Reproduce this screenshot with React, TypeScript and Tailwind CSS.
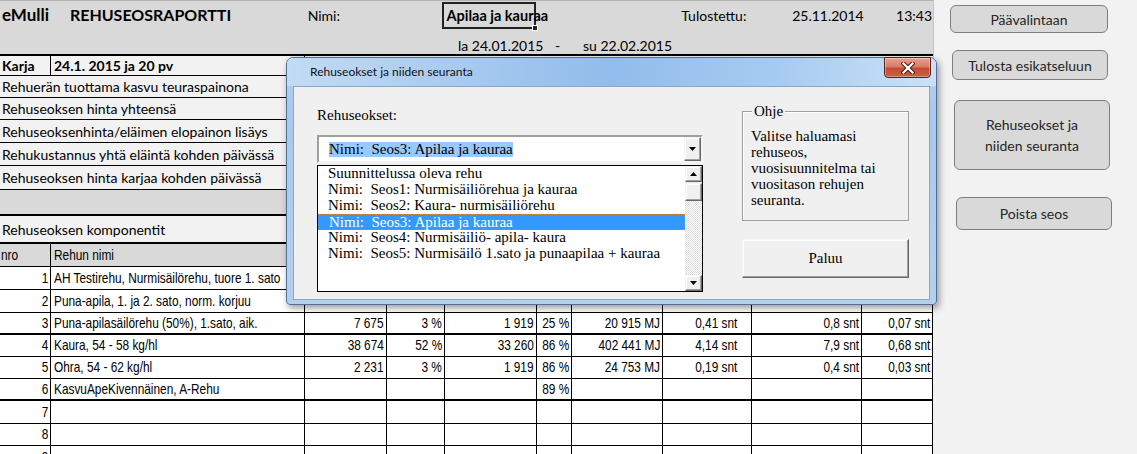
import React from 'react';

const SHEET = "font-['Lato',sans-serif]";
const NARROW = "font-['Liberation_Sans',sans-serif]";
const SERIF = "font-['Liberation_Serif',serif]";

const colW = [
  'w-[51px]',
  'w-[254px]',
  'w-[82px]',
  'w-[58px]',
  'w-[92px]',
  'w-[35px]',
  'w-[91px]',
  'w-[89px]',
  'w-[110px]',
  'w-[71px]',
];

type Row = { n: string; name: string; vals: string[]; h: string; thick?: boolean };

const dataRows: Row[] = [
  { n: '1', name: 'AH Testirehu, Nurmisäilörehu, tuore 1. sato', vals: [], h: 'h-[23px]' },
  { n: '2', name: 'Puna-apila, 1. ja 2. sato, norm. korjuu', vals: [], h: 'h-[23px]' },
  {
    n: '3',
    name: 'Puna-apilasäilörehu (50%), 1.sato, aik.',
    vals: ['7 675', '3 %', '1 919', '25 %', '20 915 MJ', '0,41 snt', '0,8 snt', '0,07 snt'],
    h: 'h-[22px]',
    thick: true,
  },
  {
    n: '4',
    name: 'Kaura, 54 - 58 kg/hl',
    vals: ['38 674', '52 %', '33 260', '86 %', '402 441 MJ', '4,14 snt', '7,9 snt', '0,68 snt'],
    h: 'h-[22px]',
  },
  {
    n: '5',
    name: 'Ohra, 54 - 62 kg/hl',
    vals: ['2 231', '3 %', '1 919', '86 %', '24 753 MJ', '0,19 snt', '0,4 snt', '0,03 snt'],
    h: 'h-[22px]',
  },
  { n: '6', name: 'KasvuApeKivennäinen, A-Rehu', vals: ['', '', '', '89 %'], h: 'h-[22px]', thick: true },
  { n: '7', name: '', vals: [], h: 'h-[23px]' },
  { n: '8', name: '', vals: [], h: 'h-[22px]' },
  { n: '9', name: '', vals: [], h: 'h-[23px]' },
];

const descRows = [
  { text: 'Rehuerän tuottama kasvu teuraspainona', h: 'h-[22px]' },
  { text: 'Rehuseoksen hinta yhteensä', h: 'h-[22px]' },
  { text: 'Rehuseoksenhinta/eläimen elopainon lisäys', h: 'h-[23px]' },
  { text: 'Rehukustannus yhtä eläintä kohden päivässä', h: 'h-[23px]' },
  { text: 'Rehuseoksen hinta karjaa kohden päivässä', h: 'h-[24px]' },
];

const listItems = [
  'Suunnittelussa oleva rehu',
  'Nimi:  Seos1: Nurmisäiliörehua ja kauraa',
  'Nimi:  Seos2: Kaura- nurmisäiliörehu',
  'Nimi:  Seos3: Apilaa ja kauraa',
  'Nimi:  Seos4: Nurmisäiliö- apila- kaura',
  'Nimi:  Seos5: Nurmisäilö 1.sato ja punaapilaa + kauraa',
];

const raised =
  'bg-[#f0f0f0] border border-t-[#f4f4f4] border-l-[#f4f4f4] border-r-[#696969] border-b-[#696969] shadow-[inset_-1px_-1px_0_#a0a0a0,inset_1px_1px_0_#ffffff]';

function Arrow({ up }: { up?: boolean }) {
  return (
    <svg width="7" height="4" viewBox="0 0 7 4">
      <path d={up ? 'M0 4 L7 4 L3.5 0 Z' : 'M0 0 L7 0 L3.5 4 Z'} fill="#000" />
    </svg>
  );
}

// narrow cell text: Arial Narrow is not installed, so squeeze Liberation Sans
function Narrow({ children, left }: { children: React.ReactNode; left?: boolean }) {
  return (
    <span className={`inline-block whitespace-nowrap scale-x-[0.79] ${left ? 'origin-left' : 'origin-right'}`}>
      {children}
    </span>
  );
}

function DataRow({ row }: { row: Row }) {
  return (
    <div
      className={`flex bg-white ${row.h} ${row.thick ? 'border-b-2' : 'border-b'} border-black ${NARROW} text-[15px] text-black`}
    >
      <div className={`${colW[0]} shrink-0 border-r border-black flex items-center justify-end pr-[2px]`}>
        <Narrow>{row.n}</Narrow>
      </div>
      <div className={`${colW[1]} shrink-0 border-r border-black flex items-center pl-[3px] overflow-hidden`}>
        <Narrow left>{row.name}</Narrow>
      </div>
      {colW.slice(2).map((w, i) => (
        <div
          key={i}
          className={`${w} shrink-0 border-r border-black flex items-center justify-end ${
            i === 5 ? 'pr-[14px]' : 'pr-[2px]'
          }`}
        >
          <Narrow>{row.vals[i] ?? ''}</Narrow>
        </div>
      ))}
    </div>
  );
}

function Sheet() {
  return (
    <div className={`w-[933px] shrink-0 ${SHEET} text-black`}>
      <div className="h-[54px] bg-[#d9d9d9] border-t border-[#b4b4b4] flex flex-col">
        <div className="h-[29px] flex items-center text-[14px]">
          <span className="pl-[2px] w-[70px] font-bold text-[17px]">eMulli</span>
          <span className="w-[238px] font-bold text-[16px]">REHUSEOSRAPORTTI</span>
          <span className="w-[135px]">Nimi:</span>
          <div className="w-[94px] h-[27px] border-2 border-[#222] relative flex items-center pl-[2px] mt-[1px]">
            <span className="font-bold text-[14.5px] whitespace-nowrap">Apilaa ja kauraa</span>
            <span className="absolute right-[-4px] bottom-[-4px] w-[6px] h-[6px] bg-[#222] border border-white" />
          </div>
          <span className="w-[145px]" />
          <span className="w-[111px]">Tulostettu:</span>
          <span className="w-[104px]">25.11.2014</span>
          <span className="flex-1 text-right pr-[1px]">13:43</span>
        </div>
        <div className="flex-1 flex items-center text-[14px] pt-[6px]">
          <span className="w-[458px]" />
          <span className="w-[97px]">la 24.01.2015</span>
          <span className="w-[28px]">-</span>
          <span>su 22.02.2015</span>
        </div>
      </div>

      <div className="h-[22px] flex bg-[#f2f2f2] border-t-2 border-b border-black font-bold text-[14px]">
        <div className="w-[51px] shrink-0 border-r border-black flex items-center pl-[2px]">Karja</div>
        <div className="w-[254px] shrink-0 border-r border-black flex items-center pl-[3px]">24.1. 2015 ja 20 pv</div>
        <div className="flex-1" />
      </div>
      {descRows.map((r) => (
        <div
          key={r.text}
          className={`${r.h} flex items-center bg-[#f2f2f2] border-b border-black pl-[2px] text-[14px] whitespace-nowrap`}
        >
          {r.text}
        </div>
      ))}
      <div className="h-[26px] bg-[#d9d9d9] border-b-2 border-black" />
      <div className="h-[28px] flex items-center bg-[#f2f2f2] border-b-2 border-black pl-[2px] text-[14px]">
        Rehuseoksen komponentit
      </div>
      <div className={`h-[23px] flex bg-[#d9d9d9] border-b border-black ${NARROW} text-[15px]`}>
        <div className="w-[51px] shrink-0 border-r border-black flex items-center pl-[1px]">
          <Narrow left>nro</Narrow>
        </div>
        <div className="w-[254px] shrink-0 border-r border-black flex items-center pl-[3px]">
          <Narrow left>Rehun nimi</Narrow>
        </div>
        <div className="flex-1" />
      </div>
      {dataRows.map((r) => (
        <DataRow key={r.n} row={r} />
      ))}
    </div>
  );
}

function SideButton({ label, cls }: { label: React.ReactNode; cls: string }) {
  return (
    <div
      className={`${cls} flex items-center justify-center text-center rounded-[6px] border border-[#7f7f7f] bg-[#d9d9d9] text-[#262626] text-[14px] leading-[21px] ${SHEET}`}
    >
      {label}
    </div>
  );
}

function SidePanel() {
  return (
    <div className="flex-1 bg-[#f2f2f2] border-l border-[#c4c4c4] flex flex-col items-start">
      <SideButton label="Päävalintaan" cls="ml-[16px] mt-[5px] w-[158px] h-[28px]" />
      <SideButton label="Tulosta esikatseluun" cls="ml-[18px] mt-[17px] w-[156px] h-[30px]" />
      <SideButton
        label={
          <span>
            Rehuseokset ja
            <br />
            niiden seuranta
          </span>
        }
        cls="ml-[20px] mt-[20px] w-[156px] h-[70px]"
      />
      <SideButton label="Poista seos" cls="ml-[22px] mt-[27px] w-[156px] h-[33px]" />
    </div>
  );
}

function Dialog() {
  return (
    <div className="absolute left-[286px] top-[57px] w-[651px] h-[248px] rounded-t-[7px] rounded-b-[4px] border border-[#50709a] bg-[linear-gradient(180deg,#b9d4f0_0%,#a8c9ec_20%,#b4d0ee_100%)] shadow-[2px_3px_7px_rgba(0,0,0,0.4)] flex flex-col">
      <div className="h-[28px] shrink-0 relative flex items-center pl-[23px] rounded-t-[6px] bg-[linear-gradient(90deg,#c3dbf4_0%,#a9cbef_25%,#92bceb_50%,#a6cbf0_75%,#cbe1f7_100%)]">
        <span className="font-['Lato',sans-serif] text-[12px] text-[#111]">Rehuseokset ja niiden seuranta</span>
        <div className="absolute right-[5px] top-[-1px] w-[47px] h-[21px] rounded-b-[4px] border border-[#5b2117] bg-[linear-gradient(180deg,#e7a595_0%,#d77a66_45%,#c24b33_55%,#c9614a_100%)] flex items-center justify-center shadow-[inset_0_0_0_1px_rgba(255,255,255,0.35)]">
          <svg width="14" height="12" viewBox="0 0 14 12">
            <path d="M2.5 1.5 L11.5 10.5 M11.5 1.5 L2.5 10.5" stroke="#4a1a12" strokeWidth="4.2" strokeLinecap="square" />
            <path d="M2.5 1.5 L11.5 10.5 M11.5 1.5 L2.5 10.5" stroke="#ffffff" strokeWidth="2.2" strokeLinecap="square" />
          </svg>
        </div>
      </div>
      <div className={`mx-[6px] mb-[4px] flex-1 bg-[#f0f0f0] border border-[#8ba5c3] flex ${SERIF} text-[15px] text-black`}>
        <div className="ml-[23px] w-[386px] flex flex-col">
          <div className="mt-[19px] h-[18px] leading-[18px]">Rehuseokset:</div>
          <div className="mt-[11px] h-[28px] flex items-center bg-white border-2 border-t-[#a0a0a0] border-l-[#a0a0a0] border-r-[#f4f4f4] border-b-[#f4f4f4]">
            <div className="flex-1 pl-[10px] whitespace-pre">
              <span className="bg-[#99c9ff] leading-[15px] inline-block">Nimi:  Seos3: Apilaa ja kauraa</span>
            </div>
            <div className={`w-[17px] h-[24px] flex items-center justify-center ${raised}`}>
              <Arrow />
            </div>
          </div>
          <div className="mt-[2px] h-[127px] flex bg-white border border-black">
            <div className="flex-1 flex flex-col">
              {listItems.map((it, i) => (
                <div
                  key={it}
                  className={`h-[16px] leading-[15px] pl-[10px] whitespace-pre ${
                    i === 3 ? 'bg-[#3399ff] text-white border border-dotted border-[#c4823c] pl-[9px]' : ''
                  }`}
                >
                  {it}
                </div>
              ))}
            </div>
            <div className="w-[17px] flex flex-col bg-[#ebebeb]">
              <div className={`h-[16px] flex items-center justify-center ${raised}`}>
                <Arrow up />
              </div>
              <div className={`h-[18px] mt-[1px] ${raised}`} />
              <div className="flex-1 bg-[repeating-conic-gradient(#ffffff_0_25%,#dcdcdc_0_50%)] bg-[length:2px_2px]" />
              <div className={`h-[16px] flex items-center justify-center ${raised}`}>
                <Arrow />
              </div>
            </div>
          </div>
        </div>
        <div className="ml-[39px] w-[167px] flex flex-col">
          <div className="mt-[24px] h-[110px] relative border border-[#a0a0a0] shadow-[inset_1px_1px_0_#ffffff]">
            <span className="absolute left-[9px] top-[-10px] px-[2px] leading-[18px] bg-[#f0f0f0]">Ohje</span>
            <div className="pt-[16px] pl-[8px] leading-[16px]">
              <div>Valitse haluamasi</div>
              <div>rehuseos,</div>
              <div>vuosisuunnitelma tai</div>
              <div>vuositason rehujen</div>
              <div>seuranta.</div>
            </div>
          </div>
          <div className={`mt-[18px] h-[39px] flex items-center justify-center ${raised}`}>Paluu</div>
        </div>
      </div>
    </div>
  );
}

export default function App() {
  return (
    <div className="relative w-[1137px] h-[454px] overflow-hidden flex items-start bg-[#f2f2f2]">
      <Sheet />
      <SidePanel />
      <Dialog />
    </div>
  );
}
